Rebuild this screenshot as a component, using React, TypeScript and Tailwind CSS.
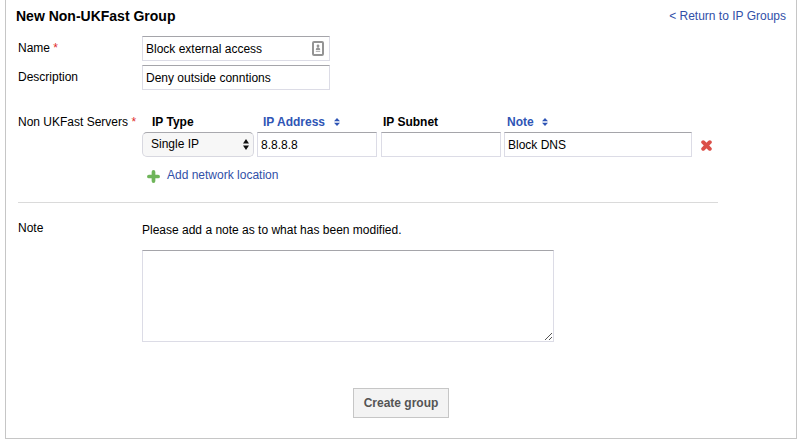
import React from 'react';

const field =
  'h-[25px] border border-[#dcdce6] border-t-[#a5a5aa] bg-white pl-[3px] text-[12px] leading-[25px] text-black outline-none';

function SortIcon() {
  return (
    <svg className="mt-[4px] h-[8px] w-[6px] shrink-0" viewBox="0 0 6 8" fill="#2f55b5">
      <path d="M3 0L6 3.2H0zM3 8L0 4.8H6z" />
    </svg>
  );
}

function ContactIcon() {
  return (
    <svg className="mr-[5px] h-[15px] w-[12px] shrink-0" viewBox="0 0 12 15">
      <rect x="1" y="1" width="10" height="13" rx="1" fill="#fff" stroke="#949494" strokeWidth="2" />
      <circle cx="6" cy="5" r="1.4" fill="#949494" />
      <path d="M3.8 9C3.8 7 5 6.2 6 6.2S8.2 7 8.2 9z" fill="#949494" />
      <path d="M3.8 10.3H8.2" stroke="#a5a5a5" strokeWidth="1" />
    </svg>
  );
}

function Label({ children, required }: { children: React.ReactNode; required?: boolean }) {
  return (
    <div className="w-[124px] shrink-0 whitespace-nowrap leading-[14px]">
      {children}
      {required && <span className="text-[#e02b2b]"> *</span>}
    </div>
  );
}

export default function App() {
  return (
    <div
      className="ml-[5px] h-[439px] w-[792px] border border-t-0 border-[#c6c6c6] bg-white text-[12px] text-black"
      style={{ fontFamily: '"Liberation Sans", Arial, sans-serif' }}
    >
      <header className="flex h-[36px] justify-between pl-[10px] pr-[10px] pt-[8px]">
        <h1 className="text-[14px] font-bold leading-[16px]">New Non-UKFast Group</h1>
        <a className="leading-[16px] text-[#3150a8]">&lt; Return to IP Groups</a>
      </header>

      <div className="flex h-[29px] pl-[12px]">
        <div className="pt-[5px]">
          <Label required>Name</Label>
        </div>
        <div className={`${field} flex w-[188px] items-center justify-between`}>
          <span className="self-start">Block external access</span>
          <ContactIcon />
        </div>
      </div>
      <div className="flex h-[49px] pl-[12px]">
        <div className="pt-[5px]">
          <Label>Description</Label>
        </div>
        <div className={`${field} w-[188px]`}>Deny outside conntions</div>
      </div>

      <section className="flex h-[88px] pl-[12px]">
        <div className="pt-[1px]">
          <Label required>Non UKFast Servers</Label>
        </div>
        <div>
          <div className="flex h-[18px] font-bold leading-[16px]">
            <div className="w-[111px] pl-[10px]">IP Type</div>
            <div className="flex w-[120px] gap-[9px] pl-[10px] text-[#2f55b5]">
              IP Address
              <SortIcon />
            </div>
            <div className="w-[124px] pl-[10px]">IP Subnet</div>
            <div className="flex gap-[8px] pl-[10px] text-[#2f55b5]">
              Note
              <SortIcon />
            </div>
          </div>
          <div className="flex">
            <div className="flex h-[25px] w-[112px] justify-between rounded-[5px] border border-[#d8d8e0] border-t-[#a9a9ae] bg-[#f7f7f7] pl-[8px] pr-[4px] leading-[22px]">
              Single IP
              <svg className="mt-[6px] h-[11px] w-[6px]" viewBox="0 0 6 11" fill="#111">
                <path d="M3 0L6 4.5H0zM3 11L0 6.5H6z" />
              </svg>
            </div>
            <div className={`${field} ml-[3px] w-[120px]`}>8.8.8.8</div>
            <div className={`${field} ml-[4px] w-[120px]`} />
            <div className={`${field} ml-[3px] w-[188px]`}>Block DNS</div>
            <svg className="ml-[9px] mt-[8px] h-[11px] w-[11px]" viewBox="0 0 11 11">
              <path d="M2.2 2.2L8.8 8.8M8.8 2.2L2.2 8.8" stroke="#db4f48" strokeWidth="3.9" strokeLinecap="round" />
            </svg>
          </div>
          <div className="flex pl-[5px] pt-[10px] text-[#3150a8]">
            <svg className="mt-[3px] h-[13px] w-[13px]" viewBox="0 0 13 13">
              <path d="M6.5 1.9V11.1M1.9 6.5H11.1" stroke="#6fb55a" strokeWidth="3.7" strokeLinecap="round" />
            </svg>
            <a className="ml-[7px] leading-[16px]">Add network location</a>
          </div>
        </div>
      </section>

      <div className="ml-[12px] h-px w-[700px] bg-[#dadada]" />

      <section className="flex h-[185px] pl-[12px]">
        <div className="pt-[18px]">
          <Label>Note</Label>
        </div>
        <div className="pt-[20px]">
          <p className="leading-[14px]">Please add a note as to what has been modified.</p>
          <div className="mt-[13px] flex h-[92px] w-[412px] items-end justify-end border border-[#dcdce6] border-t-[#a5a5aa] p-[1px]">
            <svg className="h-[7px] w-[7px]" viewBox="0 0 7 7" shapeRendering="crispEdges">
              <path
                d="M0 6h1v1H0zM1 5h1v1H1zM2 4h1v1H2zM3 3h1v1H3zM4 2h1v1H4zM5 1h1v1H5zM6 0h1v1H6zM4 6h1v1H4zM5 5h1v1H5zM6 4h1v1H6z"
                fill="#555"
              />
            </svg>
          </div>
        </div>
      </section>

      <button className="ml-[347px] block h-[30px] w-[96px] border border-[#c6c6c6] bg-[#f3f3f3] text-[12px] font-bold leading-[28px] text-[#555]">
        Create group
      </button>
    </div>
  );
}
